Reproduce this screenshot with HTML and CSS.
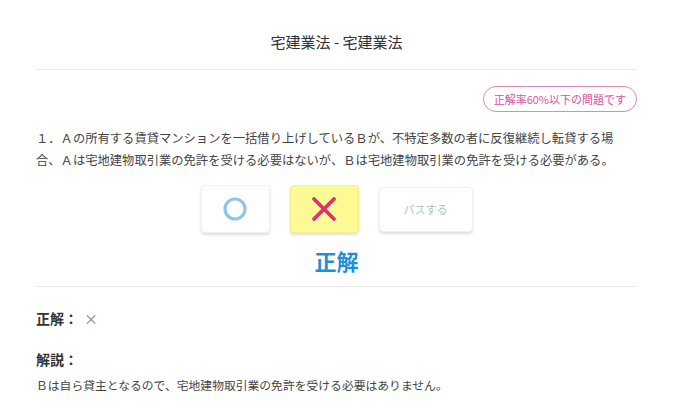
FILE: index.html
```html
<!DOCTYPE html>
<html lang="ja">
<head>
    <meta charset="UTF-8">
    <meta name="viewport" content="width=device-width, initial-scale=1.0">
    <title>宅建業法 - 宅建業法</title>
    <link rel="stylesheet" href="styles.css">
</head>
<body>

<div class="page">
    <div class="header">
        <h1 class="title">宅建業法 - 宅建業法</h1>
    </div>

    <div class="badge-row">
        <span class="badge">正解率60%以下の問題です</span>
    </div>

    <p class="question">１．Ａの所有する賃貸マンションを一括借り上げしているＢが、不特定多数の者に反復継続し転貸する場合、Ａは宅地建物取引業の免許を受ける必要はないが、Ｂは宅地建物取引業の免許を受ける必要がある。</p>

    <div class="answers">
        <button class="answer-btn">
            <svg width="26" height="26" viewBox="0 0 26 26"><circle cx="13" cy="13" r="10" fill="none" stroke="#90c6e2" stroke-width="3.2"/></svg>
        </button>
        <button class="answer-btn selected">
            <svg width="28" height="28" viewBox="0 0 28 28"><path d="M4 4 L24 24 M24 4 L4 24" stroke="#d7356f" stroke-width="3.8" stroke-linecap="round"/></svg>
        </button>
        <button class="answer-btn pass">パスする</button>
    </div>

    <div class="verdict">正解</div>

    <div class="result">
        <div class="result-line"><span class="result-label">正解：</span><span class="result-mark">×</span></div>
        <div class="result-label explain-label">解説：</div>
        <p class="explain">Ｂは自ら貸主となるので、宅地建物取引業の免許を受ける必要はありません。</p>
    </div>
</div>

</body>
</html>
```

FILE: styles.css
```css
body {
    font-family: "Noto Sans CJK JP", "Noto Sans", sans-serif;
    background-color: #fff;
    color: #444;
    margin: 0;
}
.page {
    width: 601px;
    margin-left: 36px;
}
.header {
    padding: 32px 0 17px;
    border-bottom: 1px solid #ececec;
    text-align: center;
}
.title {
    margin: 0;
    font-size: 15px;
    line-height: 20px;
    font-weight: normal;
    color: #333;
}
.badge-row {
    margin-top: 15px;
    text-align: right;
}
.badge {
    display: inline-block;
    box-sizing: border-box;
    height: 26px;
    padding: 0 10px;
    border: 1px solid #d98cb5;
    border-radius: 13px;
    font-size: 11px;
    line-height: 24px;
    color: #d9539d;
}
.question {
    margin: 15px 0 0;
    font-size: 12.3px;
    line-height: 22px;
    color: #444;
}
.answers {
    display: flex;
    justify-content: center;
    align-items: center;
    gap: 20px;
    margin-top: 14px;
}
.answer-btn {
    display: flex;
    justify-content: center;
    align-items: center;
    width: 69px;
    height: 48px;
    padding: 0;
    background-color: #fff;
    border: 1px solid #f0f0f0;
    border-radius: 4px;
    box-shadow: 0 2px 3px rgba(0, 0, 0, 0.13);
    font-family: inherit;
    cursor: pointer;
}
.answer-btn.selected {
    background-color: #fdfa96;
    border-color: #f3ef8a;
}
.answer-btn.pass {
    width: 94px;
    height: 45px;
    font-size: 11px;
    color: #a8c4d3;
}
.verdict {
    margin-top: 14px;
    font-size: 22px;
    line-height: 26px;
    font-weight: bold;
    color: #1f8fd8;
    text-align: center;
    padding-bottom: 13px;
    border-bottom: 1px solid #ececec;
}
.result {
    padding-top: 20px;
}
.result-line {
    line-height: 20px;
}
.result-label {
    font-size: 14px;
    line-height: 20px;
    font-weight: bold;
    color: #333;
}
.result-mark {
    margin-left: 6px;
    font-size: 14px;
    color: #888;
}
.explain-label {
    margin-top: 21px;
}
.explain {
    margin: 6px 0 0;
    font-size: 11.8px;
    line-height: 20px;
    color: #444;
}
```
